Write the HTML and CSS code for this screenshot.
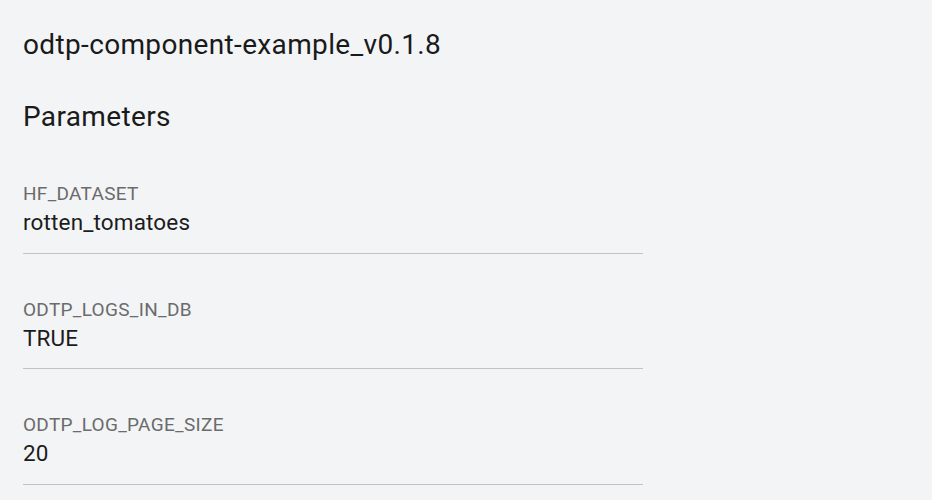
FILE: index.html
```html
<!DOCTYPE html>
<html>
<head>
<meta charset="utf-8">
<link rel="stylesheet" href="styles.css">
</head>
<body>
<main class="page">
  <h1 class="title">odtp-component-example_v0.1.8</h1>
  <h2 class="section">Parameters</h2>
  <div class="params">
    <div class="param">
      <div class="label">HF_DATASET</div>
      <div class="value">rotten_tomatoes</div>
    </div>
    <div class="param">
      <div class="label">ODTP_LOGS_IN_DB</div>
      <div class="value">TRUE</div>
    </div>
    <div class="param">
      <div class="label">ODTP_LOG_PAGE_SIZE</div>
      <div class="value">20</div>
    </div>
  </div>
</main>
</body>
</html>
```

FILE: styles.css
```css
html, body {
  margin: 0;
  padding: 0;
  background: #f3f4f6;
}
body {
  font-family: Roboto, "Liberation Sans", sans-serif;
  color: #1a1a1a;
}
.page {
  padding: 27px 23px 0;
}
.title {
  margin: 0;
  font-size: 28px;
  font-weight: 400;
  line-height: 36px;
  letter-spacing: 0.35px;
}
.section {
  margin: 36px 0 0;
  font-size: 28px;
  font-weight: 400;
  line-height: 36px;
  letter-spacing: 0.35px;
}
.params {
  margin-top: 47px;
  width: 620px;
}
.param {
  border-bottom: 1px solid #c2c2c2;
  padding-bottom: 13.5px;
  margin-bottom: 44px;
}
.param:last-child {
  margin-bottom: 0;
}
.label {
  font-size: 19px;
  line-height: 24px;
  letter-spacing: 0.3px;
  color: #6b6b6b;
}
.value {
  font-size: 22.5px;
  line-height: 33px;
  letter-spacing: 0.15px;
  color: #1c1c1c;
}
```
